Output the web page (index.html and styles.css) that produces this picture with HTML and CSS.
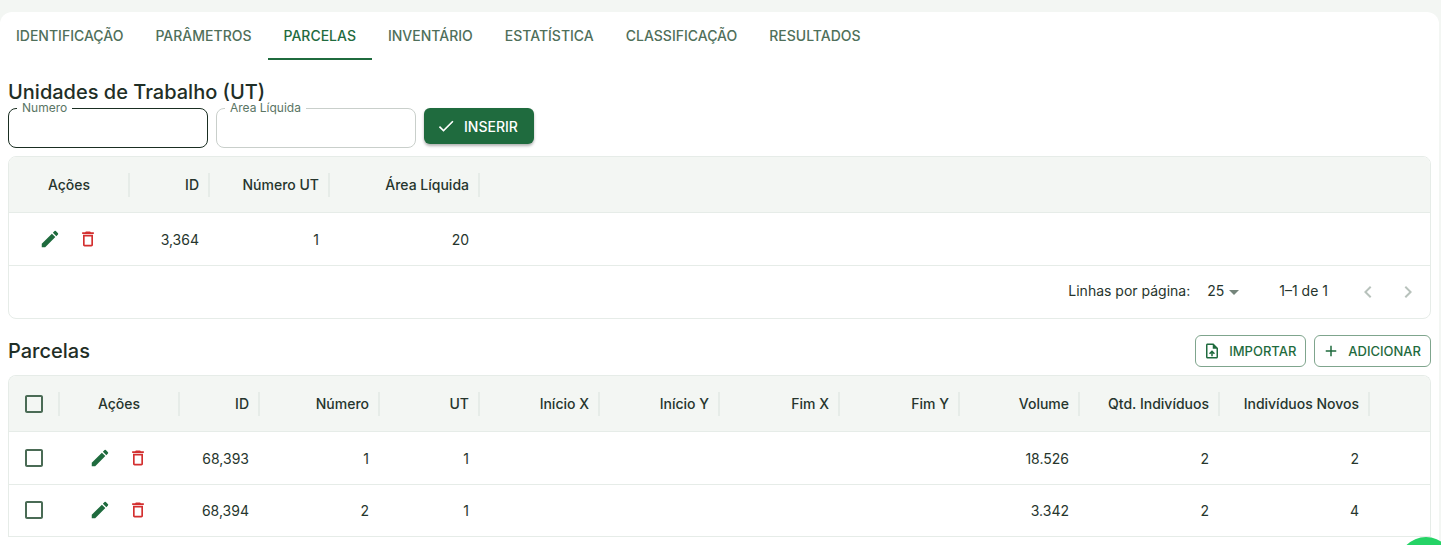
FILE: index.html
```html
<!DOCTYPE html>
<html lang="pt-BR">
<head>
<meta charset="utf-8">
<title>Parcelas</title>
<link rel="stylesheet" href="styles.css">
</head>
<body>
<svg class="defs" width="0" height="0" aria-hidden="true">
  <symbol id="i-edit" viewBox="0 0 24 24"><path d="M3 17.25V21h3.75L17.81 9.94l-3.75-3.75L3 17.25zM20.71 7.04c.39-.39.39-1.02 0-1.41l-2.34-2.34a.9959.9959 0 0 0-1.41 0l-1.83 1.83 3.75 3.75 1.83-1.83z"/></symbol>
  <symbol id="i-del" viewBox="0 0 24 24"><path d="M6 19c0 1.1.9 2 2 2h8c1.1 0 2-.9 2-2V7H6v12zM8 9h8v10H8V9zm7.5-5-1-1h-5l-1 1H5v2h14V4h-3.5z"/></symbol>
  <symbol id="i-box" viewBox="0 0 24 24"><path d="M19 5v14H5V5h14m0-2H5c-1.1 0-2 .9-2 2v14c0 1.1.9 2 2 2h14c1.1 0 2-.9 2-2V5c0-1.1-.9-2-2-2z"/></symbol>
</svg>
<main class="card">
  <nav class="tabs">
    <a class="tab">Identificação</a>
    <a class="tab">Parâmetros</a>
    <a class="tab active">Parcelas</a>
    <a class="tab">Inventário</a>
    <a class="tab">Estatística</a>
    <a class="tab">Classificação</a>
    <a class="tab">Resultados</a>
  </nav>
  <section class="content">
    <h2 class="title title-ut">Unidades de Trabalho (UT)</h2>
    <form class="ut-form">
      <div class="field focused"><span class="field-label">Numero</span></div>
      <div class="field"><span class="field-label">Area Líquida</span></div>
      <button type="button" class="btn-primary">
        <svg class="btn-icon" viewBox="0 0 24 24"><path d="M9 16.17 4.83 12l-1.42 1.41L9 19 21 7l-1.41-1.41z"/></svg>
        Inserir
      </button>
    </form>

    <div class="table">
      <div class="row head cols-ut">
        <div class="cell center sep">Ações</div>
        <div class="cell num sep">ID</div>
        <div class="cell num sep">Número UT</div>
        <div class="cell num sep">Área Líquida</div>
      </div>
      <div class="row cols-ut">
        <div class="cell actions">
          <svg class="ic-edit"><use href="#i-edit"/></svg>
          <svg class="ic-del"><use href="#i-del"/></svg>
        </div>
        <div class="cell num">3,364</div>
        <div class="cell num">1</div>
        <div class="cell num">20</div>
      </div>
      <footer class="pager">
        <span class="pager-label">Linhas por página:</span>
        <span class="pager-size"><span class="pager-text">25</span><svg class="caret" viewBox="0 0 24 24"><path d="M7 10l5 5 5-5z"/></svg></span>
        <span class="pager-range">1–1 de 1</span>
        <span class="pager-nav">
          <svg viewBox="0 0 24 24"><path d="M15.41 7.41 14 6l-6 6 6 6 1.41-1.41L10.83 12z"/></svg>
          <svg viewBox="0 0 24 24"><path d="M10 6 8.59 7.41 13.17 12l-4.58 4.59L10 18l6-6z"/></svg>
        </span>
      </footer>
    </div>

    <div class="section-head">
      <h2 class="title">Parcelas</h2>
      <div class="section-actions">
        <button type="button" class="btn-outline">
          <svg class="btn-icon-sm" viewBox="0 0 24 24"><path d="M14 2H6c-1.1 0-1.99.9-1.99 2L4 20c0 1.1.89 2 1.99 2H18c1.1 0 2-.9 2-2V8l-6-6zm4 18H6V4h7v5h5v11zM8 15.01l1.41 1.41L11 14.84V19h2v-4.16l1.59 1.59L16 15.01 12.01 11 8 15.01z"/></svg>
          Importar
        </button>
        <button type="button" class="btn-outline">
          <svg class="btn-icon-sm" viewBox="0 0 24 24"><path d="M19 13h-6v6h-2v-6H5v-2h6V5h2v6h6v2z"/></svg>
          Adicionar
        </button>
      </div>
    </div>

    <div class="table open">
      <div class="row head cols-parc">
        <div class="cell center sep"><svg class="ic-box"><use href="#i-box"/></svg></div>
        <div class="cell center sep">Ações</div>
        <div class="cell num sep">ID</div>
        <div class="cell num sep">Número</div>
        <div class="cell num sep">UT</div>
        <div class="cell num sep">Início X</div>
        <div class="cell num sep">Início Y</div>
        <div class="cell num sep">Fim X</div>
        <div class="cell num sep">Fim Y</div>
        <div class="cell num sep">Volume</div>
        <div class="cell num sep">Qtd. Indivíduos</div>
        <div class="cell num sep">Indivíduos Novos</div>
      </div>
      <div class="row cols-parc">
        <div class="cell center"><svg class="ic-box"><use href="#i-box"/></svg></div>
        <div class="cell actions">
          <svg class="ic-edit"><use href="#i-edit"/></svg>
          <svg class="ic-del"><use href="#i-del"/></svg>
        </div>
        <div class="cell num">68,393</div>
        <div class="cell num">1</div>
        <div class="cell num">1</div>
        <div class="cell num"></div>
        <div class="cell num"></div>
        <div class="cell num"></div>
        <div class="cell num"></div>
        <div class="cell num">18.526</div>
        <div class="cell num">2</div>
        <div class="cell num">2</div>
      </div>
      <div class="row cols-parc">
        <div class="cell center"><svg class="ic-box"><use href="#i-box"/></svg></div>
        <div class="cell actions">
          <svg class="ic-edit"><use href="#i-edit"/></svg>
          <svg class="ic-del"><use href="#i-del"/></svg>
        </div>
        <div class="cell num">68,394</div>
        <div class="cell num">2</div>
        <div class="cell num">1</div>
        <div class="cell num"></div>
        <div class="cell num"></div>
        <div class="cell num"></div>
        <div class="cell num"></div>
        <div class="cell num">3.342</div>
        <div class="cell num">2</div>
        <div class="cell num">4</div>
      </div>
    </div>
  </section>
</main>
<div class="fab"></div>
</body>
</html>
```
FILE: styles.css
```css
* { box-sizing: border-box; }
html, body { height: 100%; }
body {
  margin: 0;
  padding: 12px 2px 0 0;
  overflow: hidden;
  background: #f3f6f3;
  color: #26352d;
  font-family: Inter, "Liberation Sans", sans-serif;
  font-size: 14px;
}
.defs { position: absolute; }
.card {
  background: #fff;
  border-radius: 12px 12px 0 0;
  height: 533px;
  overflow: hidden;
}
.tabs { display: flex; height: 48px; }
.tab {
  position: relative;
  display: flex;
  align-items: center;
  height: 48px;
  padding: 0 16px 2px;
  color: #4f6f5a;
  font-size: 14px;
  font-weight: 500;
  text-transform: uppercase;
}
.tab.active { color: #1f6b3e; }
.tab.active::after {
  content: "";
  position: absolute;
  left: 0;
  right: 0;
  bottom: 0;
  height: 2px;
  background: #1f6b3e;
}
.content { padding: 20px 8px 0; }
.title {
  margin: 0;
  font-size: 20px;
  font-weight: 500;
  line-height: 24px;
  color: #1f2e26;
}
.ut-form { display: flex; gap: 8px; align-items: flex-start; margin: 4px 0 8px; }
.field {
  position: relative;
  width: 200px;
  height: 40px;
  border: 1px solid #c9cfcb;
  border-radius: 8px;
}
.field.focused { border-color: #1a2e22; }
.field-label {
  position: absolute;
  top: -8px;
  left: 8px;
  padding: 0 5px;
  background: #fff;
  color: #5a7564;
  font-size: 12px;
  line-height: 14px;
}
.btn-primary {
  display: flex;
  align-items: center;
  gap: 8px;
  height: 36px;
  padding: 0 16px 0 12px;
  border: 0;
  border-radius: 6px;
  background: #1f6b3e;
  color: #fff;
  font: 500 14px Inter, "Liberation Sans", sans-serif;
  text-transform: uppercase;
  box-shadow: 0 2px 3px rgba(0, 0, 0, 0.3);
}
.btn-icon { width: 20px; height: 20px; fill: #fff; }
.table {
  border: 1px solid #e6ece8;
  border-radius: 8px;
  overflow: hidden;
}
.table.open { border-bottom: 0; border-radius: 8px 8px 0 0; }
.row {
  display: grid;
  height: 52.5px;
  border-bottom: 1px solid #e6ece8;
}
.row.head { height: 56px; background: #f3f6f3; font-weight: 500; }
.cols-ut { grid-template-columns: 120px 80px 120px 150px; }
.cols-parc { grid-template-columns: 50px 120px 80px 120px 100px 120px 120px 120px 120px 120px 140px 150px; }
.cell {
  position: relative;
  display: flex;
  align-items: center;
  padding: 0 10px;
  min-width: 0;
  white-space: nowrap;
}
.row:not(.head) .cell.num { padding-top: 1px; }
.cell.center { justify-content: center; padding: 0; }
.cell.num { justify-content: flex-end; }
.cell.sep::after {
  content: "";
  position: absolute;
  right: -1px;
  top: 16px;
  width: 2px;
  height: 24px;
  background: #e6ece8;
}
.cell.actions { justify-content: center; gap: 17px; padding: 0 1px 0 0; }
.ic-edit { width: 22px; height: 22px; fill: #1f6b3e; }
.ic-del { width: 20px; height: 20px; fill: #d32f2f; }
.ic-box { width: 24px; height: 24px; fill: #4a6b55; }
.pager {
  display: flex;
  align-items: center;
  justify-content: flex-end;
  height: 52.5px;
  padding-right: 10px;
}
.pager-label { margin: 0 17px 2px 0; }
.pager-size { display: flex; align-items: center; gap: 0; margin-right: 33px; }
.pager-text { margin: 0 -2px 2px 0; }
.caret { width: 24px; height: 24px; fill: #75857b; }
.pager-range { margin: 0 28px 2px 0; }
.pager-nav { display: flex; gap: 16px; }
.pager-nav svg { width: 24px; height: 24px; fill: #b8c2bc; }
.section-head {
  display: flex;
  align-items: center;
  justify-content: space-between;
  margin: 16px 0 8px;
  height: 32px;
}
.section-actions { display: flex; gap: 8px; }
.btn-outline {
  display: flex;
  align-items: center;
  gap: 8px;
  height: 32px;
  padding: 0 9px 0 7px;
  border: 1px solid #7fa58d;
  border-radius: 6px;
  background: #fff;
  color: #1f6b3e;
  font: 500 13px Inter, "Liberation Sans", sans-serif;
  text-transform: uppercase;
}
.btn-icon-sm { width: 18px; height: 18px; fill: #1f6b3e; }
.fab {
  position: fixed;
  right: -13px;
  top: 537px;
  width: 56px;
  height: 56px;
  border-radius: 50%;
  background: #25d366;
}
```
